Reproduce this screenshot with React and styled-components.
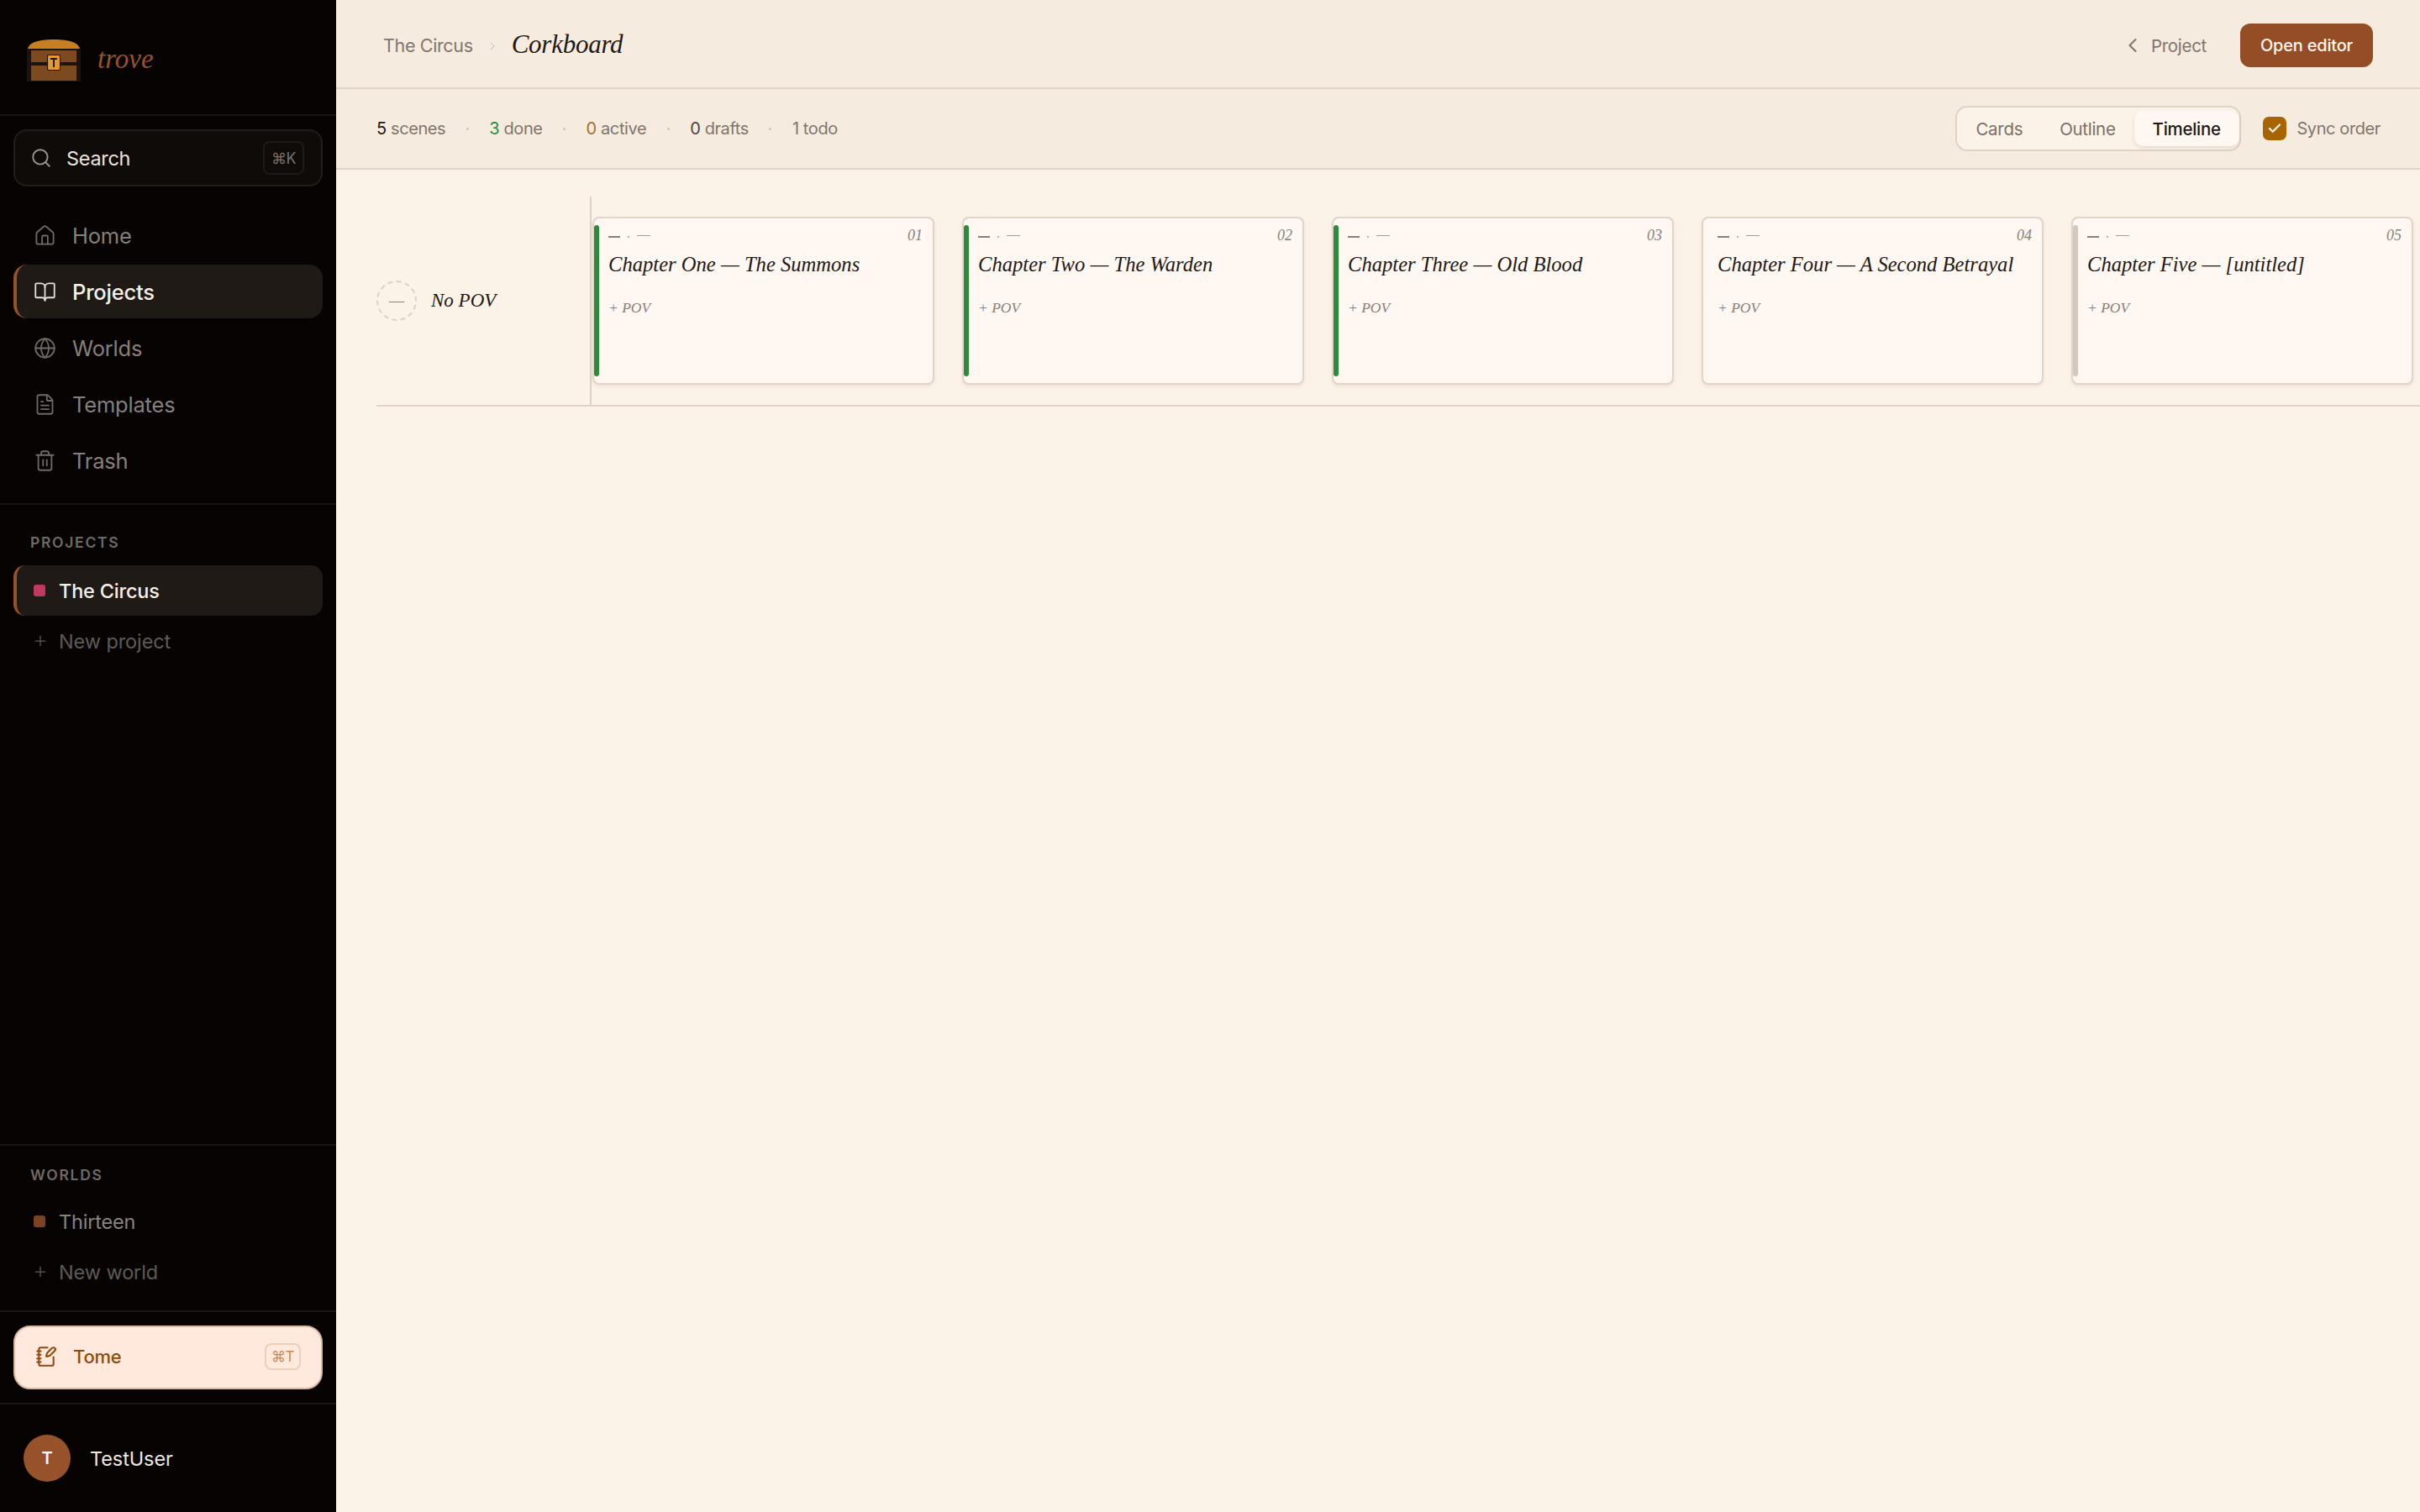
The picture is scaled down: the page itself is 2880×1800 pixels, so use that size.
import styled, { createGlobalStyle } from "styled-components"
import { Search, House, BookOpen, Globe, FileText, Trash2, Plus, ChevronLeft, ChevronRight, Check, NotebookPen } from "lucide-react"

const SANS = `Inter, "Liberation Sans", sans-serif`
const SERIF = `"Liberation Serif", serif`

const GlobalStyle = createGlobalStyle`
    html, body { margin: 0; padding: 0; background: #fcf3e8; }
    * { box-sizing: border-box; }
    body { font-family: ${SANS}; }
`

const Shell = styled.div`
    display: flex;
    height: 1800px;
    width: 2880px;
    overflow: hidden;
`

/* sidebar */
const Sidebar = styled.aside`
    width: 400px;
    flex-shrink: 0;
    display: flex;
    flex-direction: column;
    background: #070302;
`
const Brand = styled.div`
    height: 138px;
    flex-shrink: 0;
    display: flex;
    align-items: center;
    gap: 20px;
    padding: 8px 0 0 32px;
    border-bottom: 2px solid #1a1512;
`
const BrandName = styled.span`
    font-family: ${SERIF};
    font-style: italic;
    font-size: 33px;
    color: #97522a;
    margin-top: -4px;
`
const SearchBox = styled.div`
    margin: 16px 16px 0;
    height: 68px;
    display: flex;
    align-items: center;
    padding: 0 20px 0 18px;
    gap: 17px;
    background: #0f0b09;
    border: 2px solid #221d1a;
    border-radius: 16px;
    color: #eae4dc;
    font-size: 23.5px;
    letter-spacing: -0.3px;
    svg { color: #9a948d; }
`
const Kbd = styled.span`
    margin-left: auto;
    padding: 0 ${({ $pad }) => $pad || 8}px;
    height: ${({ $h }) => $h || 40}px;
    display: flex;
    align-items: center;
    border: 2px solid ${({ $line }) => $line || "#1e1a17"};
    border-radius: 8px;
    font-size: ${({ $size }) => $size || 18}px;
    font-weight: 400;
    letter-spacing: -0.5px;
    color: ${({ $color }) => $color || "#77716b"};
`
const Nav = styled.nav`
    display: flex;
    flex-direction: column;
    gap: 3px;
    margin-top: 26px;
    padding: 0 16px;
`
const NavItem = styled.div`
    height: 64px;
    display: flex;
    align-items: center;
    gap: 19px;
    padding-left: ${({ $active }) => ($active ? "20px" : "24px")};
    border-radius: 16px;
    font-size: 25.5px;
    letter-spacing: -0.2px;
    font-weight: ${({ $active }) => ($active ? 500 : 400)};
    color: ${({ $active }) => ($active ? "#f6efe8" : "#85807a")};
    background: ${({ $active }) => ($active ? "#201a16" : "transparent")};
    border-left: ${({ $active }) => ($active ? "4px solid #97522a" : "none")};
    svg { color: ${({ $active }) => ($active ? "#e8e1d9" : "#6f6a65")}; flex-shrink: 0; }
`
const Section = styled.div`
    display: flex;
    flex-direction: column;
    padding: 0 16px ${({ $bottom }) => $bottom || 0}px;
    border-top: 2px solid #1a1512;
    margin-top: ${({ $gap }) => $gap || 0}px;
`
const SectionLabel = styled.div`
    font-size: 17.5px;
    font-weight: 600;
    letter-spacing: 1.7px;
    color: #6f6a65;
    padding: ${({ $top }) => $top}px 0 0 20px;
    height: ${({ $h }) => $h}px;
`
const ProjectRow = styled.div`
    height: 60px;
    display: flex;
    align-items: center;
    gap: 16px;
    padding-left: ${({ $active }) => ($active ? "20px" : "24px")};
    border-radius: 14px;
    font-size: 23.5px;
    letter-spacing: -0.2px;
    font-weight: ${({ $active }) => ($active ? 500 : 400)};
    color: ${({ $active }) => ($active ? "#f6efe8" : "#8a847e")};
    background: ${({ $active }) => ($active ? "#201a16" : "transparent")};
    border-left: ${({ $active }) => ($active ? "4px solid #97522a" : "none")};
`
const Swatch = styled.span`
    width: 14px;
    height: 14px;
    border-radius: 3px;
    background: ${({ $color }) => $color};
    flex-shrink: 0;
`
const AddRow = styled.div`
    height: 60px;
    display: flex;
    align-items: center;
    gap: 12px;
    padding-left: 22px;
    font-size: 23.5px;
    letter-spacing: -0.1px;
    color: #5f5a55;
`
const Spacer = styled.div`
    flex: 1;
`
const TomeWrap = styled.div`
    padding: 16px;
    border-top: 2px solid #1a1512;
    border-bottom: 2px solid #1a1512;
`
const Tome = styled.div`
    height: 76px;
    display: flex;
    align-items: center;
    gap: 19px;
    padding: 0 24px 2px;
    background: #ffe9dc;
    border: 2px solid #d9b8a0;
    border-radius: 20px;
    color: #8f4a12;
    font-size: 22px;
    font-weight: 500;
    letter-spacing: -0.2px;
`
const UserRow = styled.div`
    flex: 1;
    max-height: 128px;
    display: flex;
    align-items: center;
    gap: 23px;
    padding: 0 0 0 28px;
    color: #efe7df;
    font-size: 23.5px;
    letter-spacing: -0.1px;
`
const Avatar = styled.div`
    width: 56px;
    height: 56px;
    border-radius: 50%;
    background: #97522a;
    color: #fff6ee;
    display: flex;
    align-items: center;
    justify-content: center;
    font-size: 20px;
    font-weight: 600;
`

/* main */
const Main = styled.main`
    flex: 1;
    min-width: 0;
    display: flex;
    flex-direction: column;
    background: #fcf3e8;
`
const TopBar = styled.header`
    height: 106px;
    display: flex;
    align-items: center;
    padding: 4px 56px 0;
    background: #f6ebdf;
    border-bottom: 2px solid #dfd3c6;
`
const Crumb = styled.span`
    font-size: 21.5px;
    letter-spacing: -0.35px;
    color: #80766e;
`
const CrumbSep = styled.span`
    display: flex;
    margin: 2px 15px 0;
    color: #c4b8ab;
`
const PageTitle = styled.h1`
    margin: -2px 0 0;
    font-family: ${SERIF};
    font-style: italic;
    font-weight: 400;
    font-size: 31px;
    letter-spacing: -0.25px;
    color: #1e1814;
`
const BackLink = styled.span`
    margin-left: auto;
    display: flex;
    align-items: center;
    gap: 8px;
    font-size: 20.5px;
    letter-spacing: -0.3px;
    color: #80766e;
`
const PrimaryBtn = styled.button`
    margin-left: 40px;
    width: 158px;
    height: 52px;
    border: none;
    border-radius: 12px;
    background: #954d26;
    color: #fff6ee;
    font-family: ${SANS};
    font-size: 20px;
    font-weight: 500;
    letter-spacing: -0.2px;
`
const StatsBar = styled.div`
    height: 96px;
    display: flex;
    align-items: center;
    padding: 0 47px 0 48px;
    background: #f6ebdf;
    border-bottom: 2px solid #dfd3c6;
`
const Stats = styled.div`
    display: flex;
    align-items: center;
    gap: 24.5px;
    font-size: 20px;
    letter-spacing: -0.4px;
    color: #80766e;
`
const Stat = styled.span`
    b {
        font-weight: 400;
        color: ${({ $color }) => $color};
    }
`
const Dot = styled.span`
    width: 3px;
    height: 3px;
    border-radius: 50%;
    background: #cfc4b7;
`
const Tabs = styled.div`
    margin-left: auto;
    width: 340px;
    height: 54px;
    flex-shrink: 0;
    display: flex;
    align-items: center;
    padding: 0 3px 0 0;
    background: #fcf3e8;
    border: 2px solid #dfd3c6;
    border-radius: 14px;
`
const Tab = styled.div`
    height: 42px;
    display: flex;
    align-items: center;
    padding: 0 22px;
    border-radius: 10px;
    font-size: 20.5px;
    letter-spacing: -0.3px;
    font-weight: ${({ $active }) => ($active ? 500 : 400)};
    color: ${({ $active }) => ($active ? "#1e1814" : "#7a7068")};
    background: ${({ $active }) => ($active ? "#fff8f2" : "transparent")};
    box-shadow: ${({ $active }) => ($active ? "0 2px 4px rgba(90,60,30,.14)" : "none")};
    margin-left: ${({ $active }) => ($active ? "auto" : 0)};
`
const SyncToggle = styled.label`
    display: flex;
    align-items: center;
    gap: 12px;
    margin-left: 26px;
    font-size: 20px;
    letter-spacing: -0.4px;
    white-space: nowrap;
    color: #80766e;
`
const CheckBox = styled.span`
    width: 28px;
    height: 28px;
    border-radius: 7px;
    background: #a86400;
    color: #fff6ee;
    display: flex;
    align-items: center;
    justify-content: center;
`

/* timeline */
const Board = styled.div`
    padding: 32px 0 0 48px;
    overflow: hidden;
`
const Lane = styled.section`
    display: flex;
    border-bottom: 2px solid #dfd3c6;
    width: 2432px;
`
const LaneHead = styled.div`
    width: 256px;
    flex-shrink: 0;
    display: flex;
    align-items: center;
    gap: 17px;
    border-right: 2px solid #dfd3c6;
`
const PovBadge = styled.div`
    width: 48px;
    height: 48px;
    border-radius: 50%;
    border: 2px dashed #dcd2c6;
    display: flex;
    align-items: center;
    justify-content: center;
    color: #8a7f76;
    font-family: ${SERIF};
    font-size: 18px;
`
const PovName = styled.span`
    font-family: ${SERIF};
    font-style: italic;
    font-size: 23px;
    color: #1e1814;
`
const Track = styled.div`
    display: flex;
    gap: 33px;
    padding: 24px 0 24px 1px;
`
const Card = styled.article`
    position: relative;
    width: 407px;
    height: 200px;
    flex-shrink: 0;
    padding: 10px 12px 0 17px;
    background: #fff8f2;
    border: 2px solid #e0d5c8;
    border-radius: 8px;
    box-shadow: 0 2px 4px rgba(90, 60, 30, .1);
`
const StatusBar = styled.span`
    position: absolute;
    left: 0;
    top: 8px;
    bottom: 8px;
    width: 6px;
    border-radius: 3px;
    background: ${({ $color }) => $color};
`
const CardMeta = styled.div`
    display: flex;
    align-items: center;
    height: 20px;
    font-family: ${SERIF};
    color: #8a7f76;
`
const MetaDash = styled.span`
    width: ${({ $w }) => $w}px;
    height: ${({ $thick }) => ($thick ? 2 : 1)}px;
    background: ${({ $thick }) => ($thick ? "#8a7f76" : "#a89d93")};
    margin-top: ${({ $thick }) => ($thick ? 3 : 0)}px;
`
const MetaDot = styled.span`
    width: 2px;
    height: 2px;
    margin: 3px 9px 0;
    border-radius: 50%;
    background: #a89d93;
`
const CardNum = styled.span`
    margin-left: auto;
    font-style: italic;
    font-size: 18px;
    color: #8a7f76;
`
const CardTitle = styled.h3`
    margin: 9px 0 0;
    font-family: ${SERIF};
    font-style: italic;
    font-weight: 400;
    font-size: 24.6px;
    line-height: 32px;
    color: #1e1814;
`
const AddPov = styled.div`
    margin-top: 25px;
    font-family: ${SERIF};
    font-style: italic;
    font-size: 17.5px;
    color: #8a7f76;
`

// logo is a small chest, drawn by hand
const ChestLogo = () => (
    <svg width="64" height="50" viewBox="0 0 64 50">
        <path d="M1 11C3 4 12 0 32 0s29 4 31 11z" fill="#c77f24" />
        <rect x="0" y="11" width="64" height="39" fill="#1c1310" />
        <rect x="5" y="13" width="54" height="36" fill="#7c4a1e" />
        <rect x="5" y="27" width="54" height="4" fill="#1c1310" />
        <rect x="24.5" y="18.5" width="15" height="18" rx="1.5" fill="#e49b2a" stroke="#1c1310" strokeWidth="1.2" />
        <rect x="28" y="22" width="8" height="2" fill="#1c1310" />
        <rect x="31" y="22" width="2" height="11" fill="#1c1310" />
    </svg>
)

const NAV = [
    { label: "Home", icon: House },
    { label: "Projects", icon: BookOpen, active: true },
    { label: "Worlds", icon: Globe },
    { label: "Templates", icon: FileText },
    { label: "Trash", icon: Trash2 },
]

const SCENES = [
    { num: "01", title: "Chapter One — The Summons", color: "#2f8a3e" },
    { num: "02", title: "Chapter Two — The Warden", color: "#2f8a3e" },
    { num: "03", title: "Chapter Three — Old Blood", color: "#2f8a3e" },
    { num: "04", title: "Chapter Four — A Second Betrayal", color: "transparent" },
    { num: "05", title: "Chapter Five — [untitled]", color: "#d0c9c2" },
]

const App = () => {
    return <Shell>
        <GlobalStyle />
        <Sidebar>
            <Brand>
                <ChestLogo />
                <BrandName>trove</BrandName>
            </Brand>
            <SearchBox>
                <Search size={26} strokeWidth={1.75} />
                Search
                <Kbd>⌘K</Kbd>
            </SearchBox>
            <Nav>
                {NAV.map(item => (
                    <NavItem key={item.label} $active={item.active}>
                        <item.icon size={27} strokeWidth={1.6} />
                        {item.label}
                    </NavItem>
                ))}
            </Nav>
            <Section $gap={19}>
                <SectionLabel $top={34} $h={72}>PROJECTS</SectionLabel>
                <ProjectRow $active>
                    <Swatch $color="#c0395f" />
                    The Circus
                </ProjectRow>
                <AddRow><Plus size={20} strokeWidth={1.5} />New project</AddRow>
            </Section>
            <Spacer />
            <Section $bottom={16}>
                <SectionLabel $top={24} $h={60}>WORLDS</SectionLabel>
                <ProjectRow>
                    <Swatch $color="#7a4420" />
                    Thirteen
                </ProjectRow>
                <AddRow><Plus size={20} strokeWidth={1.5} />New world</AddRow>
            </Section>
            <TomeWrap>
                <Tome>
                    <NotebookPen size={26} strokeWidth={1.9} />
                    Tome
                    <Kbd $h={32} $pad={6} $size={17} $line="#ecd0bb" $color="#c08a63">⌘T</Kbd>
                </Tome>
            </TomeWrap>
            <UserRow>
                <Avatar>T</Avatar>
                TestUser
            </UserRow>
        </Sidebar>
        <Main>
            <TopBar>
                <Crumb>The Circus</Crumb>
                <CrumbSep><ChevronRight size={16} strokeWidth={1.5} /></CrumbSep>
                <PageTitle>Corkboard</PageTitle>
                <BackLink><ChevronLeft size={28} strokeWidth={1.75} />Project</BackLink>
                <PrimaryBtn>Open editor</PrimaryBtn>
            </TopBar>
            <StatsBar>
                <Stats>
                    <Stat $color="#1e1814"><b>5</b> scenes</Stat>
                    <Dot />
                    <Stat $color="#2f8a3e"><b>3</b> done</Stat>
                    <Dot />
                    <Stat $color="#a86f1e"><b>0</b> active</Stat>
                    <Dot />
                    <Stat $color="#4d453f"><b>0</b> drafts</Stat>
                    <Dot />
                    <Stat $color="#80766e"><b>1</b> todo</Stat>
                </Stats>
                <Tabs>
                    <Tab>Cards</Tab>
                    <Tab>Outline</Tab>
                    <Tab $active>Timeline</Tab>
                </Tabs>
                <SyncToggle>
                    <CheckBox><Check size={18} strokeWidth={3} /></CheckBox>
                    Sync order
                </SyncToggle>
            </StatsBar>
            <Board>
                <Lane>
                    <LaneHead>
                        <PovBadge>—</PovBadge>
                        <PovName>No POV</PovName>
                    </LaneHead>
                    <Track>
                        {SCENES.map(scene => (
                            <Card key={scene.num}>
                                <StatusBar $color={scene.color} />
                                <CardMeta>
                                    <MetaDash $w={14} $thick />
                                    <MetaDot />
                                    <MetaDash $w={16} />
                                    <CardNum>{scene.num}</CardNum>
                                </CardMeta>
                                <CardTitle>{scene.title}</CardTitle>
                                <AddPov>+ POV</AddPov>
                            </Card>
                        ))}
                    </Track>
                </Lane>
            </Board>
        </Main>
    </Shell>
}
export default App
